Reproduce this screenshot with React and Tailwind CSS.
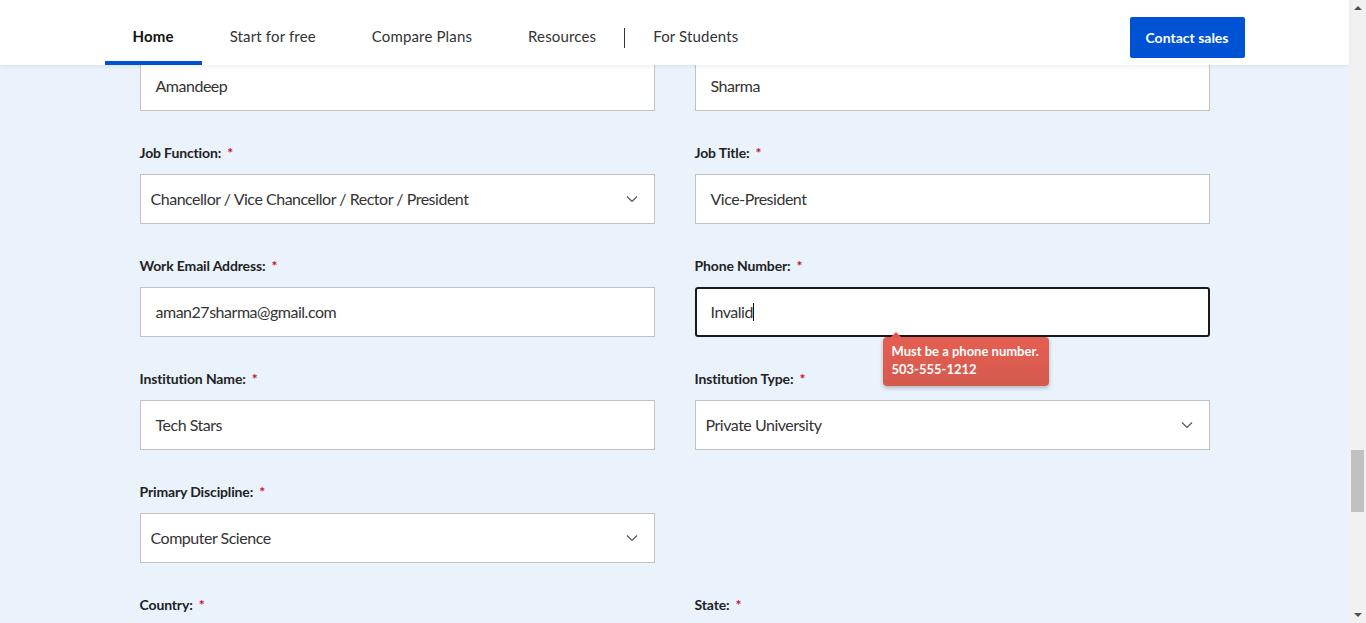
import React from "react";

const font = { fontFamily: '"Lato", "Liberation Sans", sans-serif' };

const navItems = ["Home", "Start for free", "Compare Plans", "Resources", "For Students"];

const Chevron = () => (
  <svg width="12" height="8" viewBox="0 0 12 8" className="text-[#555]">
    <path d="M1 1.5 6 6.5 11 1.5" fill="none" stroke="currentColor" strokeWidth="1.2" />
  </svg>
);

const Label = ({ text }) => (
  <div className="h-[20px] pb-[4px] flex items-center text-[14px] font-bold text-[#222] tracking-[-0.01em]">
    {text}
    <span className="ml-[6px] text-[#c8102e]">*</span>
  </div>
);

const TextField = ({ value }) => (
  <div className="h-[50px] bg-white border border-[#c2c2c2] flex items-center pl-[15px] text-[16px] text-[#333] tracking-[-0.03em]">
    {value}
  </div>
);

const SelectField = ({ value }) => (
  <div className="h-[50px] bg-white border border-[#c2c2c2] flex items-center justify-between pl-[10px] pr-[16px] text-[16px] text-[#333] tracking-[-0.03em]">
    <span>{value}</span>
    <Chevron />
  </div>
);

const Field = ({ label, children }) => (
  <div className="flex flex-col gap-[10px]">
    {label && <Label text={label} />}
    {children}
  </div>
);

const App = () => {
  return (
    <div className="h-[623px] w-[1366px] flex overflow-hidden bg-[#eaf2fc]" style={font}>
      <div className="flex-1 flex flex-col relative">
        <header className="h-[65px] bg-white shadow-[0_2px_4px_rgba(0,0,0,0.06)] relative z-10 shrink-0">
          <div className="w-[1140px] mx-auto h-full flex items-stretch justify-between">
            <nav className="flex items-stretch">
              {navItems.map((item, i) => (
                <div key={item} className="flex items-center">
                  {item === "For Students" && <span className="w-px h-[20px] bg-[#333] mt-[10px]" />}
                  <a
                    className={`h-full flex items-center px-[28px] pt-[11px] border-b-4 text-[15px] tracking-[0.01em] ${
                      i === 0 ? "font-bold text-[#111] border-[#0052d4]" : "text-[#333] border-transparent"
                    }`}
                  >
                    {item}
                  </a>
                </div>
              ))}
            </nav>
            <div className="flex items-center pt-[10px]">
              <button className="h-[41px] px-[16px] bg-[#0052d4] rounded-[2px] text-white text-[14px] font-bold">
                Contact sales
              </button>
            </div>
          </div>
        </header>

        <main className="flex-1 overflow-hidden">
          <div className="w-[1070px] mx-auto grid grid-cols-2 gap-x-[40px] gap-y-[33px] mt-[-4px]">
            <Field>
              <TextField value="Amandeep" />
            </Field>
            <Field>
              <TextField value="Sharma" />
            </Field>

            <Field label="Job Function:">
              <SelectField value="Chancellor / Vice Chancellor / Rector / President" />
            </Field>
            <Field label="Job Title:">
              <TextField value="Vice-President" />
            </Field>

            <Field label="Work Email Address:">
              <TextField value="aman27sharma@gmail.com" />
            </Field>
            <Field label="Phone Number:">
              <div className="relative">
                <div className="h-[50px] bg-white border-2 border-[#1a1a1a] rounded-[3px] flex items-center pl-[14px] text-[16px] text-[#333] tracking-[-0.03em]">
                  Invalid
                  <span className="w-px h-[18px] bg-[#111]" />
                </div>
                <div className="absolute left-[188px] top-[45px] z-10">
                  <div className="ml-[8px] w-0 h-0 border-x-[5px] border-x-transparent border-b-[5px] border-b-[#e0574b]" />
                  <div className="w-[166px] rounded-[4px] bg-gradient-to-b from-[#e55f52] to-[#d45a4e] shadow-[0_2px_4px_rgba(0,0,0,0.25)] px-[9px] pt-[5px] pb-[8px] text-white text-[13px] font-bold leading-[18px]">
                    Must be a phone number.
                    <br />
                    503-555-1212
                  </div>
                </div>
              </div>
            </Field>

            <Field label="Institution Name:">
              <TextField value="Tech Stars" />
            </Field>
            <Field label="Institution Type:">
              <SelectField value="Private University" />
            </Field>

            <Field label="Primary Discipline:">
              <SelectField value="Computer Science" />
            </Field>
            <div />

            <Field label="Country:">
              <div className="h-[50px]" />
            </Field>
            <Field label="State:">
              <div className="h-[50px]" />
            </Field>
          </div>
        </main>
      </div>

      <div className="w-[17px] bg-[#f1f1f1] flex flex-col items-center justify-between shrink-0">
        <div className="w-0 h-0 border-x-[4px] border-x-transparent border-b-[4px] border-b-[#505050] mt-[6px]" />
        <div className="flex-1 w-full relative">
          <div className="absolute left-[2px] right-[2px] top-[440px] h-[62px] bg-[#c1c1c1]" />
        </div>
        <div className="w-0 h-0 border-x-[4px] border-x-transparent border-t-[4px] border-t-[#505050] mb-[6px]" />
      </div>
    </div>
  );
};

export default App;
